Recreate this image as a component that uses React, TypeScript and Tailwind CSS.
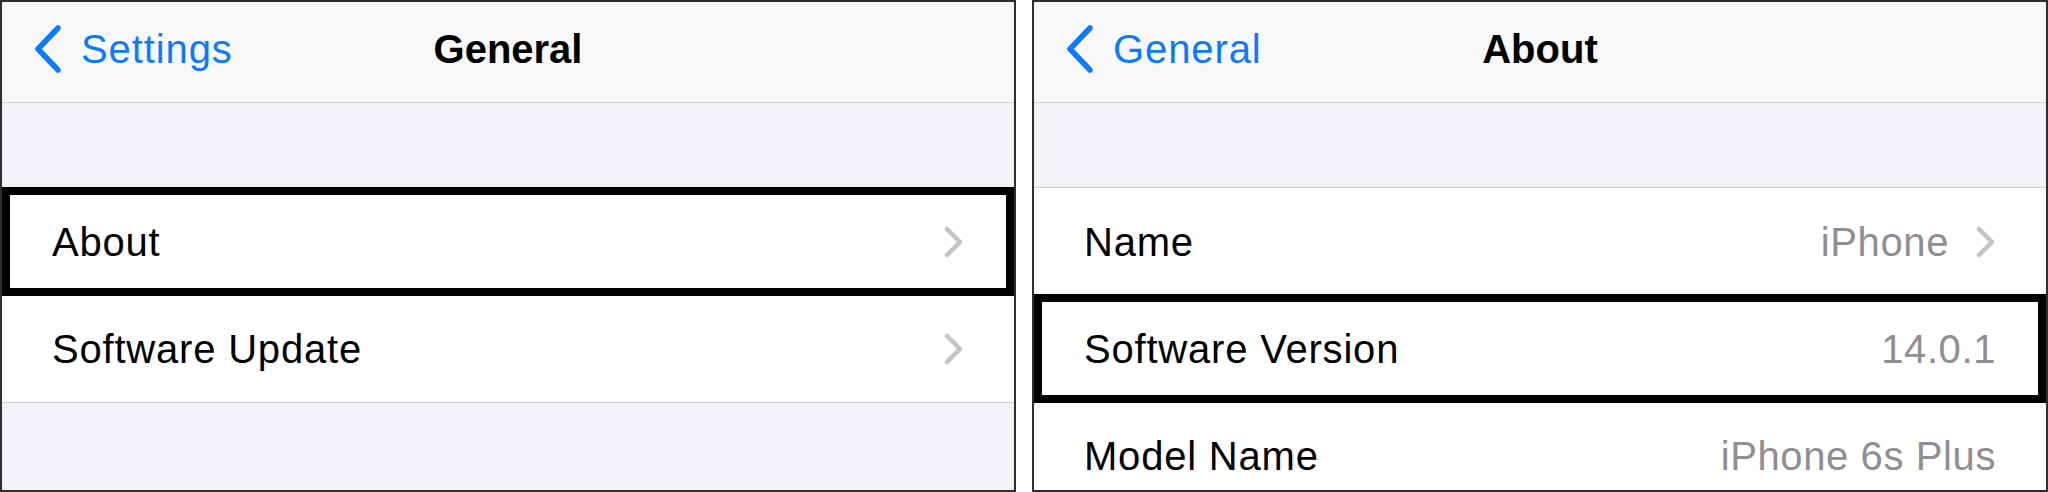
const font = { fontFamily: '"Liberation Sans", Arial, sans-serif' };

const BackChevron = () => (
  <svg width="30" height="48" viewBox="0 0 30 48" className="shrink-0">
    <polyline points="25,3 5,24 25,45" fill="none" stroke="#0a7aff" strokeWidth="5.5" strokeLinecap="round" strokeLinejoin="round" />
  </svg>
);

const RowChevron = () => (
  <svg width="20" height="32" viewBox="0 0 20 32" className="shrink-0">
    <polyline points="3,3 16,16 3,29" fill="none" stroke="#c4c4c8" strokeWidth="4.5" strokeLinecap="round" strokeLinejoin="round" />
  </svg>
);

type Row = { label: string; value?: string; chevron?: boolean; boxed?: boolean };

const SettingsRow = ({ row, last }: { row: Row; last?: boolean }) => {
  if (row.boxed) {
    return (
      <div className="flex items-center justify-between h-[109px] -mt-px shrink-0 bg-white border-[8px] border-black pl-[42px] pr-[42px]">
        <span className="text-[40px] tracking-[0.8px] text-black">{row.label}</span>
        <div className="flex items-center gap-[27px]">
          {row.value && <span className="text-[40px] tracking-[0.6px] text-[#8e8e93]">{row.value}</span>}
          {row.chevron && <RowChevron />}
        </div>
      </div>
    );
  }
  return (
    <div className={`flex items-center justify-between h-[107px] shrink-0 bg-white pl-[50px] pr-[50px] ${last ? "border-b border-[#c8c7cc]" : ""}`}>
      <span className="text-[40px] tracking-[0.8px] text-black">{row.label}</span>
      <div className="flex items-center gap-[27px]">
        {row.value && <span className="text-[40px] tracking-[0.6px] text-[#8e8e93]">{row.value}</span>}
        {row.chevron && <RowChevron />}
      </div>
    </div>
  );
};

const Panel = ({ back, title, rows }: { back: string; title: string; rows: Row[] }) => (
  <div className="relative flex flex-col w-[1016px] h-[492px] border-2 border-[#2e2e2e] overflow-hidden bg-[#f2f2f7]">
    <div className="relative flex items-center h-[101px] shrink-0 bg-[#f8f8f8] border-b border-[#cfcfd3] pl-[31px] pb-[6px]">
      <div className="flex items-center gap-[18px] text-[#0a7aff]">
        <BackChevron />
        <span className="text-[40px] tracking-[0.9px]">{back}</span>
      </div>
      <div className="absolute inset-x-0 top-0 bottom-[6px] flex items-center justify-center pointer-events-none">
        <span className="text-[40px] font-bold text-black">{title}</span>
      </div>
    </div>
    <div className="h-[85px] shrink-0 border-b border-[#cfcfd3]" />
    {rows.map((r, i) => (
      <SettingsRow key={r.label} row={r} last={i === rows.length - 1} />
    ))}
    <div className="flex-1" />
  </div>
);

export default function App() {
  return (
    <div className="flex gap-[16px] w-[2048px] h-[492px] bg-white" style={font}>
      <Panel
        back="Settings"
        title="General"
        rows={[
          { label: "About", chevron: true, boxed: true },
          { label: "Software Update", chevron: true },
        ]}
      />
      <Panel
        back="General"
        title="About"
        rows={[
          { label: "Name", value: "iPhone", chevron: true },
          { label: "Software Version", value: "14.0.1", boxed: true },
          { label: "Model Name", value: "iPhone 6s Plus" },
        ]}
      />
    </div>
  );
}
